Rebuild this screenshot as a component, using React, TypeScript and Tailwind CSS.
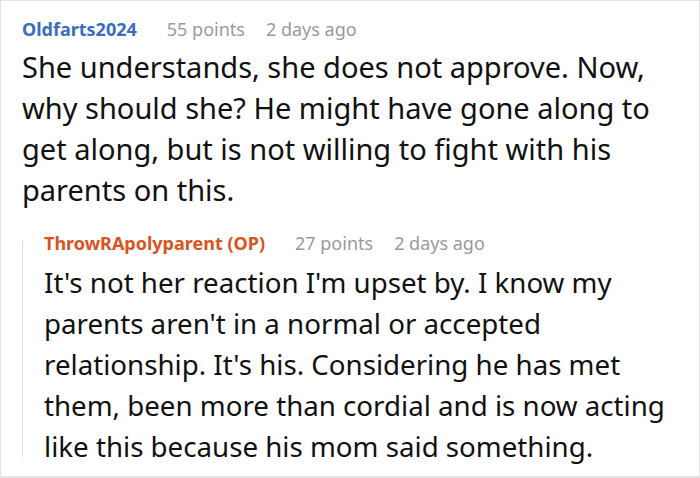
import React from "react";

const font = { fontFamily: '"Noto Sans", "Open Sans", sans-serif' };

function Header({ name, color, points }: { name: string; color: string; points: string }) {
  return (
    <div className="flex items-baseline h-[24px] leading-[24px] text-[18px]">
      <span className={`font-bold ${color}`}>{name}</span>
      <span className="ml-[30px] text-[#9a9a9a]">{points}</span>
      <span className="ml-[21px] text-[#9a9a9a]">2 days ago</span>
    </div>
  );
}

export default function App() {
  return (
    <div
      className="w-[700px] h-[478px] bg-white border border-b-2 border-[#e4e4e4] pt-[16px] pl-[21px] pr-[10px] overflow-hidden"
      style={font}
    >
      <Header name="Oldfarts2024" color="text-[#3a6cc0]" points="55 points" />
      <p className="mt-[5px] text-[29px] leading-[41px] text-[#111111] whitespace-nowrap">
        She understands, she does not approve. Now,
        <br />
        why should she? He might have gone along to
        <br />
        get along, but is not willing to fight with his
        <br />
        parents on this.
      </p>
      <div className="mt-[21px] flex">
        <div className="w-[1px] bg-[#dddddd] mt-[10px] mb-[10px] shrink-0" />
        <div className="pl-[21px]">
          <Header name="ThrowRApolyparent (OP)" color="text-[#d9541e]" points="27 points" />
          <p className="mt-[7px] text-[27.7px] leading-[41px] text-[#111111] whitespace-nowrap">
            It's not her reaction I'm upset by. I know my
            <br />
            parents aren't in a normal or accepted
            <br />
            relationship. It's his. Considering he has met
            <br />
            them, been more than cordial and is now acting
            <br />
            like this because his mom said something.
          </p>
        </div>
      </div>
    </div>
  );
}
